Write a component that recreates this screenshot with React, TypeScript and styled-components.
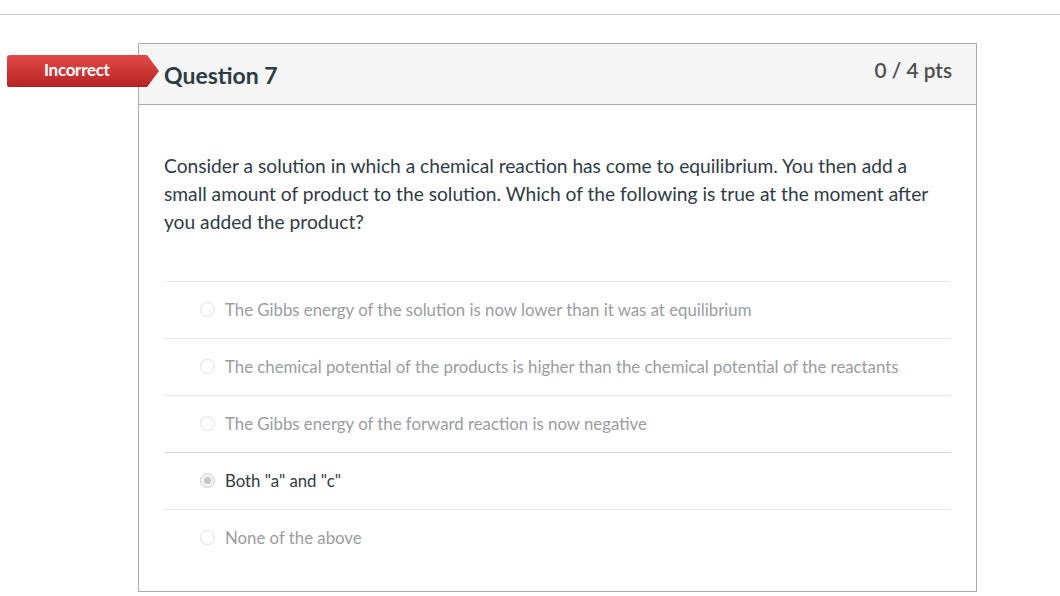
import React from 'react';
import styled, { createGlobalStyle } from 'styled-components';

const GlobalStyle = createGlobalStyle`
  html, body {
    margin: 0;
    padding: 0;
    background: #ffffff;
  }
  body {
    font-family: Lato, "Liberation Sans", sans-serif;
    color: #2d3b45;
  }
`;

const Page = styled.div`
  width: 1060px;
  height: 596px;
  overflow: hidden;
`;

const TopRule = styled.div`
  margin-top: 14px;
  height: 1px;
  background: #c7cdd1;
`;

const QuestionArea = styled.div`
  padding: 28px 0 0 138px;
`;

const QuestionBox = styled.div`
  position: relative;
  width: 837px;
  border: 1px solid #aaaaaa;
  background: #ffffff;
`;

// sonuç rozeti kutunun kenarına biniyor
const Badge = styled.div`
  position: absolute;
  left: -132px;
  top: 11px;
  width: 140px;
  height: 32px;
  border-radius: 3px 0 0 3px;
  background: linear-gradient(#e24a49, #b72423);
  box-shadow: inset 0 -1px 0 #a51f1f;
  color: #ffffff;
  font-weight: 700;
  font-size: 17px;
  line-height: 30px;
  letter-spacing: -0.3px;
  padding-left: 37px;
  box-sizing: border-box;

  &::after {
    content: '';
    position: absolute;
    right: -12px;
    top: 0;
    width: 12px;
    height: 32px;
    background: linear-gradient(#e24a49, #b72423);
    clip-path: polygon(0 0, 100% 50%, 0 100%);
  }
`;

const Header = styled.div`
  height: 60px;
  background: #f5f5f5;
  border-bottom: 1px solid #aaaaaa;
  display: flex;
  align-items: flex-start;
  justify-content: space-between;
  padding: 0 24px 0 25px;
`;

const QuestionTitle = styled.h2`
  margin: 18px 0 0;
  font-size: 23px;
  line-height: 26px;
  font-weight: 700;
  color: #2d3b45;
`;

const Points = styled.div`
  margin-top: 13px;
  font-size: 20.8px;
  line-height: 26px;
  font-weight: 600;
  color: #4d4d4d;
`;

const Body = styled.div`
  padding: 47px 25px 25px;
`;

const QuestionText = styled.p`
  margin: 0 0 45px;
  font-size: 19.2px;
  line-height: 28px;
  color: #2d3b45;
`;

const AnswerList = styled.div`
  display: flex;
  flex-direction: column;
`;

const AnswerRow = styled.div<{ $strong?: boolean }>`
  height: 57px;
  box-sizing: border-box;
  padding: 0 0 2px 36px;
  border-top: 1px solid ${p => (p.$strong ? '#d6d6d6' : '#e8e8e8')};
  display: flex;
  align-items: center;
  gap: 10px;
`;

const Radio = styled.span<{ $checked?: boolean }>`
  width: 13px;
  height: 13px;
  border-radius: 50%;
  border: 1px solid ${p => (p.$checked ? '#cfcfcf' : '#e0e0e0')};
  background: ${p => (p.$checked ? '#f2f2f2' : '#ffffff')};
  display: flex;
  align-items: center;
  justify-content: center;
  flex-shrink: 0;

  &::after {
    content: '';
    width: 7px;
    height: 7px;
    border-radius: 50%;
    background: ${p => (p.$checked ? '#c6c6c6' : 'transparent')};
  }
`;

const AnswerLabel = styled.span<{ $checked?: boolean }>`
  font-size: 16.8px;
  color: ${p => (p.$checked ? '#2d3b45' : '#999ca1')};
`;

const answers = [
  { text: 'The Gibbs energy of the solution is now lower than it was at equilibrium', checked: false },
  { text: 'The chemical potential of the products is higher than the chemical potential of the reactants', checked: false },
  { text: 'The Gibbs energy of the forward reaction is now negative', checked: false },
  { text: 'Both "a" and "c"', checked: true },
  { text: 'None of the above', checked: false },
];

const App: React.FC = () => {
  return (
    <Page>
      <GlobalStyle />
      <TopRule />
      <QuestionArea>
        <QuestionBox>
          <Badge>Incorrect</Badge>
          <Header>
            <QuestionTitle>Question 7</QuestionTitle>
            <Points>0 / 4 pts</Points>
          </Header>
          <Body>
            <QuestionText>
              Consider a solution in which a chemical reaction has come to equilibrium. You then add a
              small amount of product to the solution. Which of the following is true at the moment after
              you added the product?
            </QuestionText>
            <AnswerList>
              {answers.map(a => (
                <AnswerRow key={a.text} $strong={a.checked}>
                  <Radio $checked={a.checked} />
                  <AnswerLabel $checked={a.checked}>{a.text}</AnswerLabel>
                </AnswerRow>
              ))}
            </AnswerList>
          </Body>
        </QuestionBox>
      </QuestionArea>
    </Page>
  );
};

export default App;
